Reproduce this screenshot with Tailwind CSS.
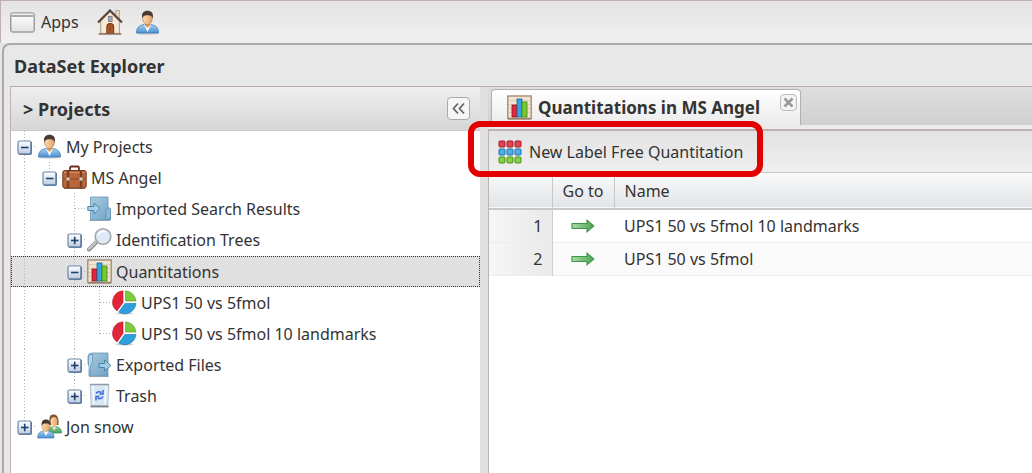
<!DOCTYPE html>
<html lang="en">
<head>
    <meta charset="UTF-8">
    <meta name="viewport" content="width=device-width, initial-scale=1.0">
    <title>DataSet Explorer</title>
    <script src="https://cdn.jsdelivr.net/npm/@tailwindcss/browser@4"></script>
</head>
<body class="min-h-screen flex flex-col overflow-x-hidden bg-[#e6e6e6] font-['Noto_Sans','Open_Sans',sans-serif] text-base text-[#333]">

    <!-- Shared icons (kept rendered at zero size so the gradients resolve) -->
    <svg class="absolute size-0" aria-hidden="true">
        <defs>
            <linearGradient id="g-blue" x1="0" y1="0" x2="0" y2="1"><stop offset="0" stop-color="#a9d0f0"/><stop offset="1" stop-color="#4a90d0"/></linearGradient>
            <linearGradient id="g-green" x1="0" y1="0" x2="0" y2="1"><stop offset="0" stop-color="#8ed29a"/><stop offset="1" stop-color="#3c9e58"/></linearGradient>
            <linearGradient id="g-face" x1="0" y1="0" x2="1" y2="0"><stop offset="0" stop-color="#fbdcae"/><stop offset="1" stop-color="#e2a468"/></linearGradient>
            <linearGradient id="g-folder" x1="0" y1="0" x2="1" y2="1"><stop offset="0" stop-color="#a9cbe0"/><stop offset="1" stop-color="#6fa3c4"/></linearGradient>
            <linearGradient id="g-box" x1="0" y1="0" x2="0" y2="1"><stop offset="0" stop-color="#ffffff"/><stop offset="1" stop-color="#bccbe0"/></linearGradient>
            <linearGradient id="g-win" x1="0" y1="0" x2="0" y2="1"><stop offset="0" stop-color="#ffffff"/><stop offset="1" stop-color="#e2e2e2"/></linearGradient>
            <linearGradient id="g-arrow" x1="0" y1="0" x2="1" y2="0"><stop offset="0" stop-color="#a8dba4"/><stop offset="1" stop-color="#4fa353"/></linearGradient>
        </defs>

        <symbol id="line" viewBox="0 0 25 31"><path d="M12.5 0V31" stroke="#b4b4b4" stroke-dasharray="1 2"/></symbol>
        <symbol id="tee" viewBox="0 0 25 31"><path d="M12.5 0V31M13 15.5H25" stroke="#b4b4b4" stroke-dasharray="1 2" fill="none"/></symbol>
        <symbol id="end" viewBox="0 0 25 31"><path d="M12.5 0V16M13 15.5H25" stroke="#b4b4b4" stroke-dasharray="1 2" fill="none"/></symbol>
        <symbol id="box" viewBox="0 0 25 31">
            <rect x="6" y="10" width="13" height="13" rx="1.5" fill="url(#g-box)" stroke="#6d88ac" stroke-width="1.2"/>
            <path d="M7 23.2H19.200V11" stroke="#41608c" fill="none"/>
            <path d="M9 16.500H16.500" stroke="#1f3f6c" stroke-width="1.600"/>
        </symbol>
        <symbol id="minus" viewBox="0 0 25 31"><use href="#box"/></symbol>
        <symbol id="plus" viewBox="0 0 25 31"><use href="#box"/><path d="M12.700 12.700V20.300" stroke="#1f3f6c" stroke-width="1.600"/></symbol>

        <symbol id="user" viewBox="0 0 25 25">
            <ellipse cx="12.500" cy="23.500" rx="11" ry="1.200" fill="#888" opacity=".4"/>
            <path d="M1.500 23C1.500 17.500 4 15.500 9 14.500H16C21 15.500 23.500 17.500 23.500 23Z" fill="url(#g-blue)" stroke="#3f7fbd" stroke-width=".8"/>
            <path d="M9 14.500L12.500 22L16 14.500Z" fill="#fff"/>
            <path d="M10 11H15V15.500L12.500 18L10 15.500Z" fill="#dc9c62"/>
            <ellipse cx="12.500" cy="8.500" rx="4.800" ry="6" fill="url(#g-face)" stroke="#a8703c" stroke-width=".6"/>
            <path d="M7.300 8.500C6 3 9 .8 12.500 .8S19 3 17.700 8.500C17 6 16 5.200 12.500 5.200S8 6 7.300 8.500Z" fill="#4b3934"/>
        </symbol>
        <symbol id="users" viewBox="0 0 25 25">
            <path d="M12.500 7C12 2.500 13.500 .5 16.500 .5S22 2.500 21.500 11H13Z" fill="#87502f"/>
            <path d="M11.500 19C11.500 14.500 13.500 13 16 12.500H19C23 13.500 24.500 15 24.500 19Z" fill="url(#g-green)" stroke="#3b9153" stroke-width=".7"/>
            <path d="M15 12.500H19.500L17.300 17Z" fill="#f6dcc0"/>
            <ellipse cx="17" cy="7.500" rx="3.400" ry="4.600" fill="url(#g-face)"/>
            <path d="M.7 24C.7 19 3 17.500 7 17H11C15.500 17.800 17 19 17 24Z" fill="url(#g-blue)" stroke="#3f7fbd" stroke-width=".7"/>
            <path d="M6.500 17H11.500L9 22Z" fill="#fff"/>
            <ellipse cx="9" cy="12.500" rx="3.900" ry="5" fill="url(#g-face)" stroke="#a8703c" stroke-width=".5"/>
            <path d="M4.800 12C4 7.500 6 5.500 9 5.500S14 7.500 13.200 12C12.500 10 12 9.500 9 9.500S5.500 10 4.800 12Z" fill="#453631"/>
        </symbol>
        <symbol id="case" viewBox="0 0 25 25">
            <path d="M8 6V3Q8 1.500 9.500 1.500H15.500Q17 1.500 17 3V6" fill="none" stroke="#6e2e22" stroke-width="1.800"/>
            <rect x=".8" y="5.500" width="23.400" height="17.500" rx="2" fill="#b8683a" stroke="#74391f"/>
            <path d="M2 7.500H23" stroke="#d38e60"/>
            <path d="M1 14H24" stroke="#8b4825"/>
            <path d="M6 5.500V23M19 5.500V23" stroke="#7c3f22" stroke-width="2.400"/>
            <path d="M4.500 12.500H7.500V15.500H4.500ZM17.500 12.500H20.500V15.500H17.500Z" fill="#d8d3ca"/>
            <path d="M2 23.500H23" stroke="#5d2c1a" opacity=".6"/>
        </symbol>
        <symbol id="import" viewBox="0 0 25 25">
            <path d="M3.500 1H21V11L23.500 13V24H3.500Z" fill="url(#g-folder)" stroke="#6594b4" stroke-width=".8"/>
            <path d="M19 24V14L21 11.500L23.500 13V22Z" fill="#8cbbd7" stroke="#5c8caf" stroke-width=".7"/>
            <path d="M.8 10.500H7V7L13 12.500L7 18V14.500H.8Z" fill="#a6d2e9" stroke="#467f9f" stroke-width=".9"/>
            <path d="M2 24.500H23" stroke="#557b95" opacity=".5"/>
        </symbol>
        <symbol id="export" viewBox="0 0 25 25">
            <path d="M5 1H21V24H2V14L1 12V4Q1.500 1 5 1Z" fill="url(#g-folder)" stroke="#6594b4" stroke-width=".8"/>
            <path d="M1.500 13V3.500L5.500 2V10L3.500 14V23" fill="#b5d6e8" stroke="#5c8caf" stroke-width=".7"/>
            <path d="M12 11.500H17.500V8L24 13.500L17.500 19V15.500H12Z" fill="#a0cde5" stroke="#467f9f" stroke-width=".9"/>
            <path d="M2 24.500H22" stroke="#557b95" opacity=".5"/>
        </symbol>
        <symbol id="search" viewBox="0 0 25 25">
            <path d="M2 22.500L9 15.500" stroke="#8f8f95" stroke-width="4" stroke-linecap="round"/>
            <path d="M2 22L9 15" stroke="#c9c9ce" stroke-width="2" stroke-linecap="round"/>
            <circle cx="16" cy="9.500" r="7.800" fill="#dde9f6" stroke="#a3a5aa" stroke-width="1.600"/>
            <path d="M10.500 9A5.500 5.500 0 0 1 19 4.500Q14 5 10.500 9Z" fill="#fff"/>
        </symbol>
        <symbol id="chart" viewBox="0 0 25 25">
            <rect x=".8" y="1" width="23.400" height="22.500" fill="#f1e5d2" stroke="#a58d74" stroke-width="1.400"/>
            <path d="M2 5.500H23M2 9.500H23M2 13.500H23M2 17.500H23" stroke="#d8c6ac" stroke-width=".7"/>
            <rect x="5" y="10" width="5" height="12" fill="#e3263c" stroke="#98101e" stroke-width=".8"/>
            <rect x="10" y="4" width="5" height="18" fill="#35a4df" stroke="#1565a0" stroke-width=".8"/>
            <rect x="15" y="7" width="5" height="15" fill="#79c833" stroke="#3f8515" stroke-width=".8"/>
            <path d="M1 24H24" stroke="#84705c"/>
        </symbol>
        <symbol id="pie" viewBox="0 0 25 25">
            <ellipse cx="12.500" cy="23.300" rx="9" ry="1.300" fill="#777" opacity=".35"/>
            <path d="M11 12.500L5 21A11.300 11.300 0 0 1 11 .8Z" fill="#e32438" stroke="#b31526" stroke-width=".6"/>
            <path d="M13.500 .8A11.300 11.300 0 0 1 24 11H13.500Z" fill="#7bcb3b" stroke="#4f9c1b" stroke-width=".6"/>
            <path d="M12.800 13.500H24A11.300 11.300 0 0 1 6.800 22Z" fill="#2f9fdd" stroke="#176eab" stroke-width=".6"/>
        </symbol>
        <symbol id="trash" viewBox="0 0 25 25">
            <path d="M3 1.500H22L20.800 23H4.200Z" fill="#d8e5f2" stroke="#a9b6c4" stroke-width=".8"/>
            <path d="M3 1.500H22" stroke="#8f9aa6" stroke-width="1.500"/>
            <path d="M6 3L7 21M19 3L18 21" stroke="#f3f8fd" stroke-width="1.600"/>
            <path d="M3.500 23.500H21.500" stroke="#77808a" stroke-width="1.800"/>
            <path d="M9 10.500Q11 7.500 14.500 9.500M16 7V11H12.500M16 13.500Q14 17 10.500 15M9 17.500V13.500H12.500" fill="none" stroke="#3b68e0" stroke-width="1.500"/>
        </symbol>
        <symbol id="house" viewBox="0 0 25 25">
            <path d="M18 1.500H21.500V9H18Z" fill="#f0dcc4" stroke="#a58468" stroke-width=".7"/>
            <path d="M3.500 11.500L12.500 2.500L21.500 11.500V23.500H3.500Z" fill="#f6e9d8" stroke="#a88c72" stroke-width=".8"/>
            <path d="M1 13L12.500 1.500L24 13" fill="none" stroke="#5a4440" stroke-width="2.200"/>
            <rect x="11" y="7" width="3.500" height="5" fill="#8db4d8" stroke="#7b6658" stroke-width=".7"/>
            <path d="M9.500 23.500V17Q9.500 14 12.700 14T16 17V23.500Z" fill="#b35a24" stroke="#713310"/>
            <path d="M12.700 15V23" stroke="#7e3c15" stroke-width=".8"/>
            <path d="M1.500 24H23.500" stroke="#866d5b" stroke-width="1.400"/>
        </symbol>
        <symbol id="arrow" viewBox="0 0 24 14"><path d="M1 4.500H16V1.200L22.800 7L16 12.800V9.500H1Z" fill="url(#g-arrow)" stroke="#3e9648" stroke-width="1.100"/></symbol>
    </svg>

    <!-- Top toolbar -->
    <nav class="h-[43px] flex items-center pl-[9px] border-t border-l border-[#c0b0b0] bg-linear-to-b from-[#e4e4e4] to-[#f0f0f0]">
        <button class="flex items-center gap-[6px]">
            <svg class="w-[25px] h-[21px]" viewBox="0 0 25 21">
                <rect x=".8" y="1" width="23.400" height="19" rx="1.500" fill="url(#g-win)" stroke="#777"/>
                <path d="M1.500 4H23.500" stroke="#a9a9a9" stroke-width="2"/>
                <path d="M2 2H23" stroke="#ddd"/>
            </svg>
            Apps
        </button>
        <button class="ml-[18px]" aria-label="Home"><svg class="size-[26px]"><use href="#house"/></svg></button>
        <button class="ml-[12px]" aria-label="User"><svg class="size-[25px]"><use href="#user"/></svg></button>
    </nav>

    <main class="grow flex flex-col ml-[2px] pl-[6px] border-t-2 border-l-2 border-[#aaa] rounded-tl-lg bg-[#e8e8e8]">
        <h1 class="h-[41px] flex items-center pl-1 text-lg font-bold">DataSet Explorer</h1>

        <div class="grow flex border-t border-[#b9abab]">
            <!-- Project tree -->
            <section class="w-[470px] shrink-0 flex flex-col border-l border-[#c0b0b0] bg-white">
                <header class="h-[44px] shrink-0 flex items-center justify-between pl-3 pr-[10px] border-b border-[#c8c8c8] bg-linear-to-b from-[#efefef] to-[#d6d6d6]">
                    <h2 class="text-lg font-bold">&gt; Projects</h2>
                    <button aria-label="Collapse panel" class="size-[23px] flex items-center justify-center rounded border border-[#aaa] bg-[#f6f6f6]">
                        <svg class="size-[15px]" viewBox="0 0 15 15" fill="none" stroke="#666" stroke-width="1.800"><path d="M7 2.500L2.500 7.500L7 12.500M13 2.500L8.500 7.500L13 12.500"/></svg>
                    </button>
                </header>
                <ul role="tree" class="whitespace-nowrap">
                    <li role="treeitem" class="h-[31px] flex items-center pl-px">
                        <svg class="w-[25px] h-[31px]"><use href="#tee"/><use href="#minus"/></svg>
                        <svg class="size-[25px]"><use href="#user"/></svg>
                        <span class="pl-1">My Projects</span>
                    </li>
                    <li role="treeitem" class="h-[31px] flex items-center pl-px">
                        <svg class="w-[25px] h-[31px]"><use href="#line"/></svg>
                        <svg class="w-[25px] h-[31px]"><use href="#end"/><use href="#minus"/></svg>
                        <svg class="size-[25px]"><use href="#case"/></svg>
                        <span class="pl-1">MS Angel</span>
                    </li>
                    <li role="treeitem" class="h-[31px] flex items-center pl-px">
                        <svg class="w-[25px] h-[31px] mr-[25px]"><use href="#line"/></svg>
                        <svg class="w-[25px] h-[31px]"><use href="#tee"/></svg>
                        <svg class="size-[25px]"><use href="#import"/></svg>
                        <span class="pl-1">Imported Search Results</span>
                    </li>
                    <li role="treeitem" class="h-[31px] flex items-center pl-px">
                        <svg class="w-[25px] h-[31px] mr-[25px]"><use href="#line"/></svg>
                        <svg class="w-[25px] h-[31px]"><use href="#tee"/><use href="#plus"/></svg>
                        <svg class="size-[25px]"><use href="#search"/></svg>
                        <span class="pl-1">Identification Trees</span>
                    </li>
                    <li role="treeitem" aria-selected="true" class="h-[31px] mt-px flex items-center bg-[#e0e0e0] border border-dotted border-[#333]">
                        <svg class="w-[25px] h-[31px] mr-[25px]"><use href="#line"/></svg>
                        <svg class="w-[25px] h-[31px]"><use href="#tee"/><use href="#minus"/></svg>
                        <svg class="size-[25px]"><use href="#chart"/></svg>
                        <span class="pl-1">Quantitations</span>
                    </li>
                    <li role="treeitem" class="h-[31px] flex items-center pl-px">
                        <svg class="w-[25px] h-[31px] mr-[25px]"><use href="#line"/></svg>
                        <svg class="w-[25px] h-[31px]"><use href="#line"/></svg>
                        <svg class="w-[25px] h-[31px]"><use href="#tee"/></svg>
                        <svg class="size-[25px]"><use href="#pie"/></svg>
                        <span class="pl-1">UPS1 50 vs 5fmol</span>
                    </li>
                    <li role="treeitem" class="h-[31px] flex items-center pl-px">
                        <svg class="w-[25px] h-[31px] mr-[25px]"><use href="#line"/></svg>
                        <svg class="w-[25px] h-[31px]"><use href="#line"/></svg>
                        <svg class="w-[25px] h-[31px]"><use href="#end"/></svg>
                        <svg class="size-[25px]"><use href="#pie"/></svg>
                        <span class="pl-1">UPS1 50 vs 5fmol 10 landmarks</span>
                    </li>
                    <li role="treeitem" class="h-[31px] flex items-center pl-px">
                        <svg class="w-[25px] h-[31px] mr-[25px]"><use href="#line"/></svg>
                        <svg class="w-[25px] h-[31px]"><use href="#tee"/><use href="#plus"/></svg>
                        <svg class="size-[25px]"><use href="#export"/></svg>
                        <span class="pl-1">Exported Files</span>
                    </li>
                    <li role="treeitem" class="h-[31px] flex items-center pl-px">
                        <svg class="w-[25px] h-[31px] mr-[25px]"><use href="#line"/></svg>
                        <svg class="w-[25px] h-[31px]"><use href="#end"/><use href="#plus"/></svg>
                        <svg class="size-[25px]"><use href="#trash"/></svg>
                        <span class="pl-1">Trash</span>
                    </li>
                    <li role="treeitem" class="h-[31px] flex items-center pl-px">
                        <svg class="w-[25px] h-[31px]"><use href="#end"/><use href="#plus"/></svg>
                        <svg class="size-[25px]"><use href="#users"/></svg>
                        <span class="pl-1">Jon snow</span>
                    </li>
                </ul>
            </section>

            <div class="w-2 shrink-0 bg-[#e0e0e0]"></div>

            <!-- Tab panel -->
            <section class="grow min-w-0 flex flex-col">
                <div role="tablist" class="h-[38px] shrink-0 flex items-end pl-[3px] bg-linear-to-b from-[#dedede] to-[#d0d0d0]">
                    <div class="h-[36px] flex items-center pl-[15px] pr-[3px] border border-b-0 border-[#b0b0b0] rounded-t bg-linear-to-b from-white to-[#ebebeb]">
                        <button role="tab" aria-selected="true" class="flex items-center gap-[6px] text-[17px] font-bold whitespace-nowrap">
                            <svg class="size-[25px]"><use href="#chart"/></svg>
                            Quantitations in MS Angel
                        </button>
                        <button aria-label="Close tab" class="size-[17px] ml-5 mb-[10px] flex items-center justify-center rounded border border-[#bbb] bg-[#f4f4f4]">
                            <svg class="size-[11px]" viewBox="0 0 11 11" stroke="#999" stroke-width="2.600"><path d="M1.500 1.500L9.500 9.500M9.500 1.500L1.500 9.500"/></svg>
                        </button>
                    </div>
                </div>
                <div class="h-1 shrink-0 bg-[#ebebeb]"></div>

                <div class="grow border-t-2 border-l border-[#bdb3b3] bg-white">
                    <div class="relative h-[42px] flex items-center pl-[9px] border-b border-[#cacaca] bg-linear-to-b from-[#e3e3e3] to-[#efefef]">
                        <button class="flex items-center gap-[7px] whitespace-nowrap">
                            <svg class="w-[24px] h-[24px]" viewBox="0 0 24 24" stroke-width="1">
                                <g fill="#e0454f" stroke="#a31c27"><rect x="1" y="1" width="6" height="6" rx="1"/><rect x="9" y="1" width="6" height="6" rx="1"/><rect x="17" y="1" width="6" height="6" rx="1"/></g>
                                <g fill="#4db1e8" stroke="#1d71ab"><rect x="1" y="9" width="6" height="6" rx="1"/><rect x="9" y="9" width="6" height="6" rx="1"/><rect x="17" y="9" width="6" height="6" rx="1"/></g>
                                <g fill="#86d044" stroke="#4b9218"><rect x="1" y="17" width="6" height="6" rx="1"/><rect x="9" y="17" width="6" height="6" rx="1"/><rect x="17" y="17" width="6" height="6" rx="1"/></g>
                            </svg>
                            New Label Free Quantitation
                        </button>
                        <!-- Highlight around the toolbar button -->
                        <div class="absolute -left-[21px] -top-[10px] w-[295px] h-[56px] rounded-xl border-6 border-[#e20000] pointer-events-none"></div>
                    </div>

                    <table class="w-full table-fixed text-left">
                        <colgroup><col class="w-[63px]"><col class="w-[62px]"><col></colgroup>
                        <thead>
                            <tr class="h-[36px] border-b-2 border-[#c8c8c8] bg-linear-to-b from-[#fafafa] to-[#e1e4e7]">
                                <td class="border-r border-[#c8c8c8]"></td>
                                <th class="border-r border-[#c8c8c8] text-center font-normal">Go to</th>
                                <th class="pl-[10px] font-normal">Name</th>
                            </tr>
                        </thead>
                        <tbody>
                            <tr class="h-[33px] border-b border-[#ededed]">
                                <td class="pr-[9px] text-right border-r border-[#d0d0d0] bg-linear-to-r from-[#f6f6f6] to-[#e9e9e9]">1</td>
                                <td><a href="#q1" aria-label="Go to UPS1 50 vs 5fmol 10 landmarks" class="flex justify-center"><svg class="w-[24px] h-[14px]"><use href="#arrow"/></svg></a></td>
                                <td class="pl-[10px]">UPS1 50 vs 5fmol 10 landmarks</td>
                            </tr>
                            <tr class="h-[33px] border-b border-[#ededed] bg-[#fafafa]">
                                <td class="pr-[9px] text-right border-r border-[#d0d0d0] bg-linear-to-r from-[#f6f6f6] to-[#e9e9e9]">2</td>
                                <td><a href="#q2" aria-label="Go to UPS1 50 vs 5fmol" class="flex justify-center"><svg class="w-[24px] h-[14px]"><use href="#arrow"/></svg></a></td>
                                <td class="pl-[10px]">UPS1 50 vs 5fmol</td>
                            </tr>
                        </tbody>
                    </table>
                </div>
            </section>
        </div>
    </main>
</body>
</html>
